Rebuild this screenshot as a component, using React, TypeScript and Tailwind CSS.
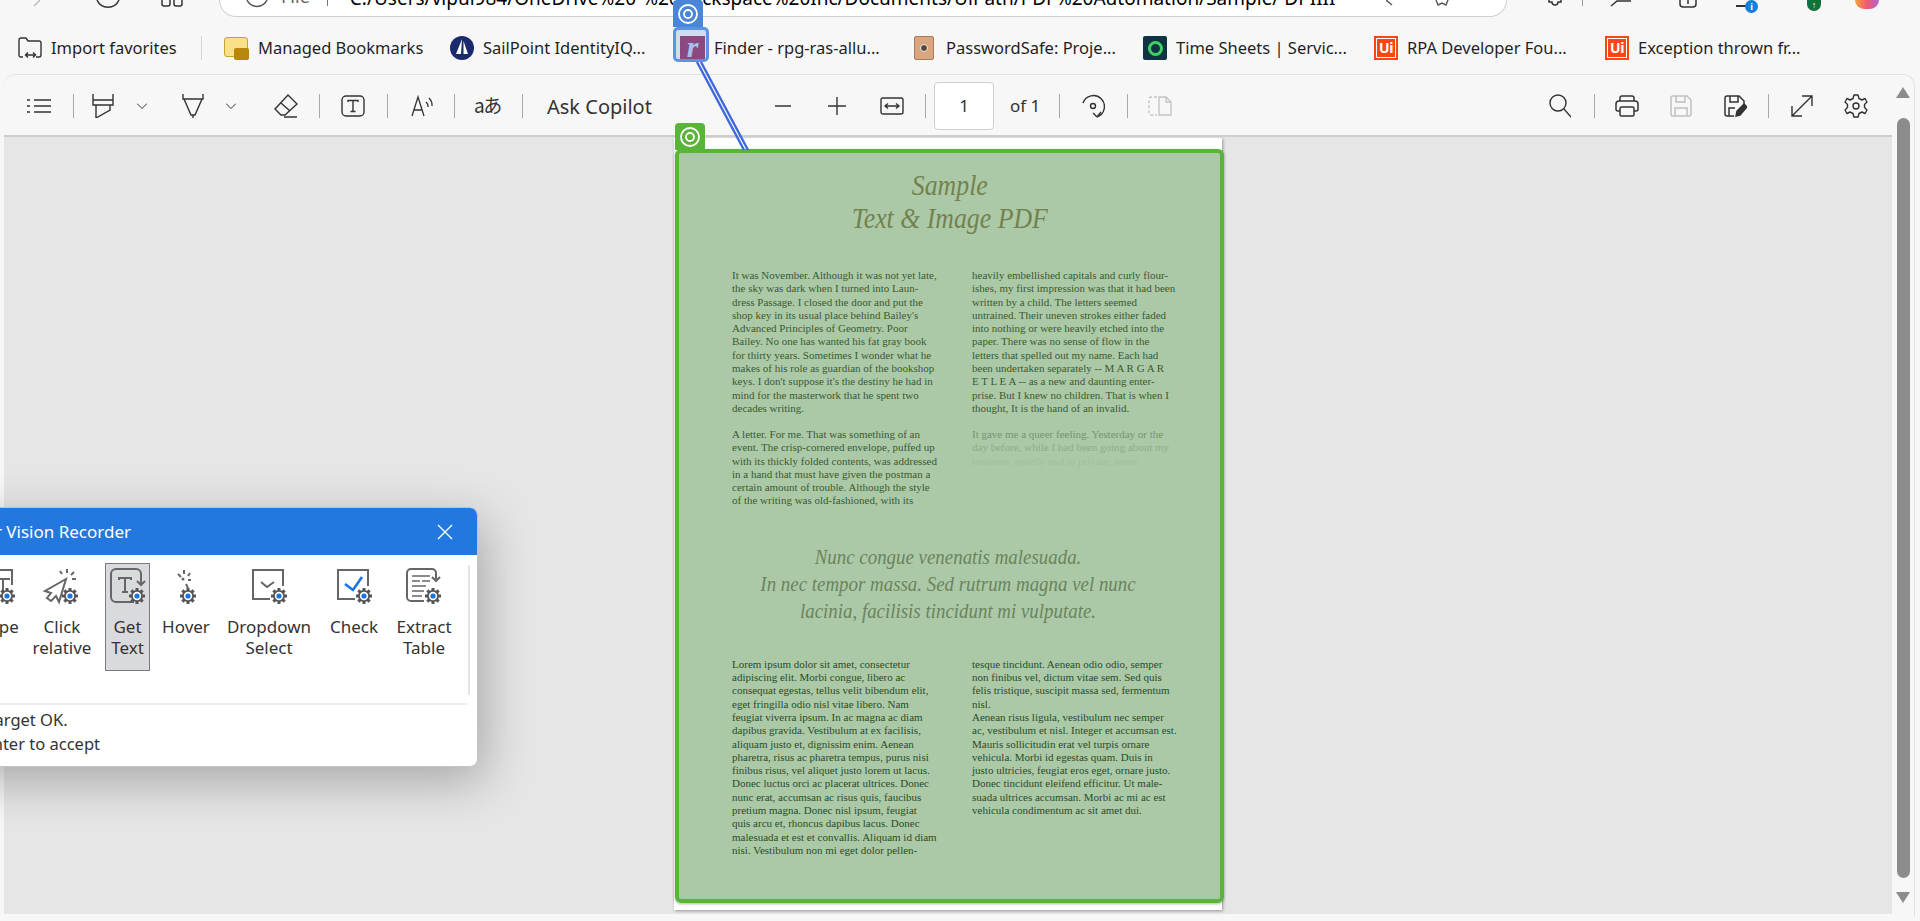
import React from "react";

const S = ({ w, h, vb, children, className = "" }: { w: number; h: number; vb?: string; children: React.ReactNode; className?: string }) => (
  <svg width={w} height={h} viewBox={vb || `0 0 ${w} ${h}`} fill="none" stroke="#333" strokeWidth={1.4} className={`shrink-0 ${className}`}>
    {children}
  </svg>
);

const Div = ({ className = "" }: { className?: string }) => <div className={`w-px h-[24px] bg-[#a9a9a9] shrink-0 ${className}`} />;

const Target = ({ className, bg }: { className: string; bg: string }) => (
  <div className={`absolute w-[30px] rounded-t-[4px] flex items-center justify-center ${bg} ${className}`}>
    <svg width="22" height="22" viewBox="0 0 22 22" fill="none" stroke="#fff" strokeWidth="1.8">
      <circle cx="11" cy="11" r="9" />
      <circle cx="11" cy="11" r="4" />
    </svg>
  </div>
);

const UiLogo = () => (
  <div className="w-[24px] h-[24px] bg-[#fa4616] p-[2px] shrink-0">
    <div className="w-full h-full border border-white flex items-center justify-center text-white text-[14px] leading-none font-bold font-['Noto_Sans',sans-serif] tracking-[-0.5px]">Ui</div>
  </div>
);

const Gear = ({ x, y }: { x: number; y: number }) => (
  <g transform={`translate(${x} ${y})`}>
    {[0, 45, 90, 135, 180, 225, 270, 315].map((a) => (
      <line key={a} x1="0" y1="-4" x2="0" y2="-8" stroke="#555" strokeWidth="3" transform={`rotate(${a})`} />
    ))}
    <circle r="6" fill="#555" stroke="none" />
    <circle r="4.2" fill="#fff" stroke="none" />
    <circle r="2.6" fill="#1a73e8" stroke="none" />
  </g>
);

const DI = ({ children }: { children: React.ReactNode }) => (
  <svg width="48" height="40" viewBox="0 0 48 40" fill="none" stroke="#666" strokeWidth="2" className="shrink-0">
    {children}
  </svg>
);

const col1a = [
  "It was November. Although it was not yet late,",
  "the sky was dark when I turned into Laun-",
  "dress Passage. I closed the door and put the",
  "shop key in its usual place behind Bailey's",
  "Advanced Principles of Geometry. Poor",
  "Bailey. No one has wanted his fat gray book",
  "for thirty years. Sometimes I wonder what he",
  "makes of his role as guardian of the bookshop",
  "keys. I don't suppose it's the destiny he had in",
  "mind for the masterwork that he spent two",
  "decades writing.",
];
const col1b = [
  "A letter. For me. That was something of an",
  "event. The crisp-cornered envelope, puffed up",
  "with its thickly folded contents, was addressed",
  "in a hand that must have given the postman a",
  "certain amount of trouble. Although the style",
  "of the writing was old-fashioned, with its",
];
const col2a = [
  "heavily embellished capitals and curly flour-",
  "ishes, my first impression was that it had been",
  "written by a child. The letters seemed",
  "untrained. Their uneven strokes either faded",
  "into nothing or were heavily etched into the",
  "paper. There was no sense of flow in the",
  "letters that spelled out my name. Each had",
  "been undertaken separately -- M A R G A R",
  "E T L E A -- as a new and daunting enter-",
  "prise. But I knew no children. That is when I",
  "thought, It is the hand of an invalid.",
];
const low1 = [
  "Lorem ipsum dolor sit amet, consectetur",
  "adipiscing elit. Morbi congue, libero ac",
  "consequat egestas, tellus velit bibendum elit,",
  "eget fringilla odio nisl vitae libero. Nam",
  "feugiat viverra ipsum. In ac magna ac diam",
  "dapibus gravida. Vestibulum at ex facilisis,",
  "aliquam justo et, dignissim enim. Aenean",
  "pharetra, risus ac pharetra tempus, purus nisi",
  "finibus risus, vel aliquet justo lorem ut lacus.",
  "Donec luctus orci ac placerat ultrices. Donec",
  "nunc erat, accumsan ac risus quis, faucibus",
  "pretium magna. Donec nisl ipsum, feugiat",
  "quis arcu et, rhoncus dapibus lacus. Donec",
  "malesuada et est et convallis. Aliquam id diam",
  "nisi. Vestibulum non mi eget dolor pellen-",
];
const low2 = [
  "tesque tincidunt. Aenean odio odio, semper",
  "non finibus vel, dictum vitae sem. Sed quis",
  "felis tristique, suscipit massa sed, fermentum",
  "nisl.",
  "Aenean risus ligula, vestibulum nec semper",
  "ac, vestibulum et nisl. Integer et accumsan est.",
  "Mauris sollicitudin erat vel turpis ornare",
  "vehicula. Morbi id egestas quam. Duis in",
  "justo ultricies, feugiat eros eget, ornare justo.",
  "Donec tincidunt eleifend efficitur. Ut male-",
  "suada ultrices accumsan. Morbi ac mi ac est",
  "vehicula condimentum ac sit amet dui.",
];

const Lines = ({ lines, className = "" }: { lines: string[]; className?: string }) => (
  <div className={`text-[11px] leading-[13.3px] whitespace-nowrap ${className}`}>
    {lines.map((l) => (
      <div key={l}>{l}</div>
    ))}
  </div>
);

export default function App() {
  return (
    <div className="relative w-[1920px] h-[921px] overflow-hidden bg-[#f7f7f7] font-['Noto_Sans',sans-serif] text-[#222]">
      {/* browser top strip */}
      <div className="flex h-[17px] overflow-hidden">
        <div className="flex items-start w-[219px] shrink-0">
          <S w={14} h={8} className="ml-[32px]" vb="0 0 14 8"><path d="M8 0 L2 6" stroke="#bbb" /></S>
          <S w={26} h={8} className="ml-[49px]" vb="0 0 26 8"><path d="M2 0 A12 12 0 0 0 24 0" strokeWidth={1.5} /></S>
          <S w={22} h={8} className="ml-[40px]" vb="0 0 22 8"><path d="M1 0 V4 a2 2 0 0 0 2 2 H7 a2 2 0 0 0 2-2 V0 M13 0 V4 a2 2 0 0 0 2 2 H19 a2 2 0 0 0 2-2 V0" strokeWidth={1.5} /></S>
        </div>
        <div className="w-[1288px] h-[17px] shrink-0 bg-white border-b border-x border-[#cfcfcf] rounded-b-[20px] flex items-start overflow-hidden">
          <S w={24} h={8} className="ml-[25px]" vb="0 0 24 8"><path d="M2 0 A11 11 0 0 0 22 0" stroke="#555" strokeWidth={1.5} /></S>
          <span className="ml-[12px] -mt-[16px] text-[18px] leading-[24px] text-[#666]">File</span>
          <div className="ml-[17px] w-px h-[6px] bg-[#777]" />
          <span className="ml-[22px] -mt-[14px] text-[19px] leading-[24px] text-black whitespace-nowrap w-[1030px] overflow-hidden">C:/Users/vipul984/OneDrive%20-%20Rackspace%20Inc/Documents/UiPath/PDF%20Automation/Sample/ DPIIII</span>
          <S w={10} h={6} className="ml-[6px]" vb="0 0 10 6"><path d="M0 0 L6 5" stroke="#555" /></S>
          <S w={14} h={6} className="ml-[39px]" vb="0 0 14 6"><path d="M1 0 L3 5 L7 3 L11 5 L13 0" stroke="#555" /></S>
        </div>
        <div className="flex items-start">
          <S w={16} h={8} className="ml-[40px]" vb="0 0 16 8"><path d="M2 0 V2 H5 A3 3 0 0 0 11 2 H14 V0" strokeWidth={1.5} /></S>
          <div className="ml-[19px] w-px h-[6px] bg-[#999]" />
          <S w={22} h={7} className="ml-[27px]" vb="0 0 22 7"><path d="M1 6 L7 1 H21" strokeWidth={1.5} /></S>
          <S w={20} h={8} className="ml-[46px]" vb="0 0 20 8"><path d="M2 0 V4 a3 3 0 0 0 3 3 H15 a3 3 0 0 0 3-3 V0 M10 0 V4" strokeWidth={1.5} /></S>
          <div className="ml-[38px] relative w-[24px] h-[13px]">
            <div className="absolute left-0 top-[5px] w-[14px] h-[2px] bg-[#333]" />
            <div className="absolute left-[9px] top-0 w-[13px] h-[13px] rounded-full bg-[#0f7fe0] text-white text-[9px] leading-[13px] text-center font-bold">i</div>
          </div>
          <div className="ml-[47px] w-[14px] h-[11px] rounded-b-full bg-[#12713b] text-white text-[9px] leading-[9px] text-center font-bold">↑</div>
          <div className="ml-[34px] w-[24px] h-[9px] rounded-b-[10px] bg-[linear-gradient(90deg,#f4a23a,#ee5a6f,#b062d8)]" />
        </div>
      </div>

      {/* bookmarks bar */}
      <div className="h-[57px] flex items-center pl-[18px] pt-[5px] text-[16.5px] whitespace-nowrap text-[#1f1f1f]">
        <S w={24} h={22} vb="0 0 24 22"><path d="M1 18 V3 a2 2 0 0 1 2-2 H8 L10 4 H21 a2 2 0 0 1 2 2 V18 a2 2 0 0 1-2 2 H18 M5 20 H3 a2 2 0 0 1-2-2 M8 18 H17 M10 15.5 L7.5 18 L10 20.5 M15 15.5 L17.5 18 L15 20.5" /></S>
        <span className="ml-[9px] w-[127px]">Import favorites</span>
        <div className="ml-[23px] w-px h-[24px] bg-[#d5d5d5]" />
        <div className="ml-[22px] relative w-[25px] h-[24px]">
          <div className="absolute left-0 top-[1px] w-[24px] h-[20px] bg-[#fbe08a] border border-[#c9a227] rounded-[3px]" />
          <div className="absolute right-0 bottom-0 w-[15px] h-[12px] bg-[#b8860b] rounded-[2px]" />
        </div>
        <span className="ml-[9px] w-[167px]">Managed Bookmarks</span>
        <svg width="24" height="24" viewBox="0 0 24 24" className="ml-[25px] shrink-0">
          <circle cx="12" cy="12" r="12" fill="#1a2a6c" />
          <path d="M12 3 L6 18 H11 Z M13.5 5 L18 18 H13.5 Z" fill="#fff" />
        </svg>
        <span className="ml-[9px] w-[165px]">SailPoint IdentityIQ...</span>
        <div className="ml-[32px] w-[25px] h-[24px] bg-[#9b3560] shrink-0 text-[#c4d0f0] font-['Liberation_Serif',serif] italic font-bold text-[30px] leading-[22px] text-center">r</div>
        <span className="ml-[9px] w-[173px]">Finder - rpg-ras-allu...</span>
        <div className="ml-[27px] w-[20px] h-[24px] rounded-[2px] bg-[#d9a67f] border border-[#a9795a] shrink-0 flex items-center justify-center">
          <div className="w-[8px] h-[8px] rounded-full bg-[#5b4636] border border-[#eee]" />
        </div>
        <span className="ml-[12px] w-[169px]">PasswordSafe: Proje...</span>
        <div className="ml-[28px] w-[24px] h-[24px] rounded-[2px] bg-[#0f3340] shrink-0 flex items-center justify-center">
          <div className="w-[15px] h-[15px] rounded-full border-[3px] border-[#3fd163]" />
        </div>
        <span className="ml-[9px] w-[198px]">Time Sheets | Servic...</span>
        <UiLogo />
        <span className="ml-[9px] w-[165px]">RPA Developer Fou...</span>
        <div className="ml-[33px]"><UiLogo /></div>
        <span className="ml-[9px] w-[168px]">Exception thrown fr...</span>
      </div>

      {/* PDF viewer card */}
      <div className="ml-[4px] w-[1911px] h-[843px] rounded-t-[12px] border-t border-r border-[#e2e2e2] bg-[#f7f7f7] flex overflow-hidden">
        <div className="flex-1 min-w-0 flex flex-col">
          {/* toolbar */}
          <div className="h-[62px] shrink-0 border-b-2 border-[#cdcdcd] flex items-center pl-[23px] pt-[2px]">
            <S w={24} h={16} vb="0 0 24 16"><path d="M7 2 H24 M7 8 H24 M7 14 H24 M0 2 H3 M0 8 H3 M0 14 H3" strokeWidth={1.6} /></S>
            <Div className="ml-[22px] w-[2px]" />
            <S w={22} h={24} className="ml-[18px]" vb="0 0 22 24"><path d="M1 0 V6 H21 V0 M1 6 V11 H21 V6 M4 11 V24 L18 16 V11" /></S>
            <S w={10} h={6} className="ml-[23px]" vb="0 0 10 6"><path d="M0 0.5 L5 5.5 L10 0.5" strokeWidth={1} /></S>
            <S w={22} h={24} className="ml-[35px]" vb="0 0 22 24"><path d="M1 0 V5 H21 V0 M2 5 L9 21 H13 L20 5 M11 21 V24" /></S>
            <S w={10} h={6} className="ml-[22px]" vb="0 0 10 6"><path d="M0 0.5 L5 5.5 L10 0.5" strokeWidth={1} /></S>
            <S w={24} h={24} className="ml-[38px]" vb="0 0 24 24"><path d="M14 1 L23 10 L11 21 H7 L1 15 Z M7 9 L16 17 M10 23 H23" /></S>
            <Div className="ml-[21px]" />
            <S w={24} h={22} className="ml-[21px]" vb="0 0 24 22"><rect x="1" y="1" width="22" height="20" rx="4" /><path d="M7 7 V5.5 H17 V7 M12 5.5 V16.5 M9.5 16.5 H14.5" /></S>
            <Div className="ml-[22px]" />
            <S w={22} h={24} className="ml-[23px]" vb="0 0 22 24"><path d="M1 22 L7 3 L13 22 M3 16 H11 M15 8 A6 6 0 0 1 17 13 M18 4 A10 10 0 0 1 21 12" strokeWidth={1.3} /></S>
            <Div className="ml-[21px]" />
            <span className="ml-[19px] w-[27px] -mt-[3px] text-[19px] leading-none text-[#333] font-['Noto_Sans_CJK_JP','Noto_Sans',sans-serif] whitespace-nowrap tracking-[-1.5px]">aあ</span>
            <Div className="ml-[21px] w-[2px]" />
            <span className="ml-[24px] w-[105px] text-[20px] mt-[1px] text-[#333] whitespace-nowrap">Ask Copilot</span>
            <S w={16} h={2} className="ml-[123px]" vb="0 0 16 2"><path d="M0 1 H16" /></S>
            <S w={18} h={18} className="ml-[37px]" vb="0 0 18 18"><path d="M0 9 H18 M9 0 V18" /></S>
            <S w={24} h={18} className="ml-[34px]" vb="0 0 24 18"><rect x="1" y="1" width="22" height="16" rx="2" /><path d="M5 9 H19 M8 6.5 L5 9 L8 11.5 M16 6.5 L19 9 L16 11.5" /></S>
            <Div className="ml-[21px]" />
            <div className="ml-[8px] w-[60px] h-[48px] bg-white border border-[#cfcfcf] rounded-[4px] flex items-center justify-center text-[17px] text-[#333] shrink-0">1</div>
            <span className="ml-[16px] w-[29px] text-[17px] text-[#333] whitespace-nowrap">of 1</span>
            <Div className="ml-[20px]" />
            <S w={24} h={24} className="ml-[21px]" vb="0 0 24 24"><path d="M2 9 A11 11 0 1 1 16 23 M16 23 L12 19 M16 23 L20 18" /><circle cx="12" cy="12" r="2.5" /></S>
            <Div className="ml-[22px]" />
            <svg width="24" height="20" viewBox="0 0 24 20" fill="none" stroke="#c4c4c4" strokeWidth="1.4" className="ml-[20px] shrink-0"><path d="M9 1 H3 a2 2 0 0 0-2 2 V17 a2 2 0 0 0 2 2 H9" strokeDasharray="3 2" /><path d="M11 1 H18 L23 6 V19 H11 Z M18 1 V6 H23" /></svg>
            <S w={22} h={24} className="ml-[377px]" vb="0 0 22 24"><circle cx="9" cy="9" r="8" /><path d="M15 15 L22 23" /></S>
            <Div className="ml-[23px] w-[2px]" />
            <S w={24} h={22} className="ml-[20px]" vb="0 0 24 22"><path d="M5 6 V3 a2 2 0 0 1 2-2 H17 a2 2 0 0 1 2 2 V6 M5 16 H3 a2 2 0 0 1-2-2 V9 a3 3 0 0 1 3-3 H20 a3 3 0 0 1 3 3 V14 a2 2 0 0 1-2 2 H19" strokeWidth={1.5} /><rect x="5" y="12" width="14" height="9" rx="1.5" strokeWidth={1.5} /></S>
            <svg width="22" height="22" viewBox="0 0 22 22" fill="none" stroke="#c0c0c0" strokeWidth="1.5" className="ml-[31px] shrink-0"><path d="M1 3 a2 2 0 0 1 2-2 H17 L21 5 V19 a2 2 0 0 1-2 2 H3 a2 2 0 0 1-2-2 Z M6 1 V7 H15 V1 M5 21 V13 H17 V21" /></svg>
            <S w={23} h={22} className="ml-[32px]" vb="0 0 23 22"><path d="M10 21 H3 a2 2 0 0 1-2-2 V3 a2 2 0 0 1 2-2 H15 L20 6 V9 M6 1 V7 H14 V1 M5 21 V13 H11" strokeWidth={1.5} /><path d="M12 21 L13 16 L20 9 L23 12 L16 20 Z" fill="#333" /></S>
            <Div className="ml-[21px]" />
            <S w={22} h={22} className="ml-[22px]" vb="0 0 22 22"><path d="M1 21 L21 1 M11 1 H21 V11 M1 11 V21 H11" strokeWidth={1.4} /></S>
            <S w={24} h={24} className="ml-[31px]" vb="0 0 24 24"><path d="M10 1 H14 L15 4.5 L18 6 L21 4.5 L23 8 L20.5 10.5 V13.5 L23 16 L21 19.5 L18 18 L15 19.5 L14 23 H10 L9 19.5 L6 18 L3 19.5 L1 16 L3.5 13.5 V10.5 L1 8 L3 4.5 L6 6 L9 4.5 Z" strokeLinejoin="round" /><circle cx="12" cy="12" r="3" /></S>
          </div>

          {/* canvas */}
          <div className="flex-1 min-h-0 bg-[#e6e6e6] mb-[3px] flex justify-center overflow-hidden">
            <div className="relative w-[548px] h-[772px] mt-px bg-white shadow-[1px_1px_3px_rgba(0,0,0,0.35)] font-['Liberation_Serif',serif] text-[#161616] pt-[31px]">
              <div className="text-center italic text-[29px] leading-[33px] text-[#9a7d60] scale-x-[0.89] pl-[4px]">
                <div>Sample</div>
                <div>Text &amp; Image PDF</div>
              </div>
              <div className="mt-[34px] grid grid-cols-[240px_1fr] pl-[58px]">
                <div>
                  <Lines lines={col1a} className="text-[#333328]" />
                  <Lines lines={col1b} className="mt-[12.7px] text-[#333328]" />
                </div>
                <div>
                  <Lines lines={col2a} className="text-[#333328]" />
                  <div className="mt-[12.7px] text-[11px] leading-[13.3px] whitespace-nowrap text-[#a0a0a0]">
                    <div>It gave me a queer feeling. Yesterday or the</div>
                    <div className="text-[#cccccc]">day before, while I had been going about my</div>
                    <div className="text-[#eeeeee]">business, quietly and in private, some</div>
                  </div>
                </div>
              </div>
              <div className="mt-[36px] text-center italic text-[21px] leading-[27px] text-[#8c8078] scale-x-[0.9]">
                <div>Nunc congue venenatis malesuada.</div>
                <div>In nec tempor massa. Sed rutrum magna vel nunc</div>
                <div>lacinia, facilisis tincidunt mi vulputate.</div>
              </div>
              <div className="mt-[33px] grid grid-cols-[240px_1fr] pl-[58px]">
                <Lines lines={low1} className="text-[#101010]" />
                <Lines lines={low2} className="text-[#101010]" />
              </div>
              {/* green selection overlay */}
              <div className="absolute left-[1px] -right-[2px] top-[11px] h-[754px] rounded-[6px] border-[4px] border-[#5ab43a] bg-[rgba(69,135,60,0.45)] shadow-[0_1px_3px_rgba(0,0,0,0.3)]" />
            </div>
          </div>
        </div>
        {/* scrollbar */}
        <div className="w-[22px] shrink-0 flex flex-col items-center pt-[12px]">
          <div className="w-0 h-0 border-x-[7.5px] border-x-transparent border-b-[11px] border-b-[#8c8c8c]" />
          <div className="mt-[20px] w-[13px] h-[760px] rounded-full bg-[#8c8c8c]" />
          <div className="mt-[14px] w-0 h-0 border-x-[7.5px] border-x-transparent border-t-[11px] border-t-[#8c8c8c]" />
        </div>
      </div>

      {/* UI automation overlay: blue target, connector, green target */}
      <svg className="absolute left-0 top-0 pointer-events-none" width="800" height="160" viewBox="0 0 800 160" fill="none">
        <path d="M697 62 L744 150 M701 62 L748 150" stroke="#3f68dc" strokeWidth="2.4" />
      </svg>
      <Target className="left-[673px] top-0 h-[27px]" bg="bg-[#4a86d8]" />
      <div className="absolute left-[673px] top-[27px] w-[36px] h-[35px] rounded-[5px] border-[3px] border-[#5b93e0] bg-[rgba(90,140,220,0.25)]" />
      <Target className="left-[675px] top-[123px] h-[27px]" bg="bg-[#5ab43a]" />

      {/* recorder dialog */}
      <div className="absolute left-[-80px] top-[507px] w-[558px] h-[260px] bg-white rounded-[8px] overflow-hidden border border-[#c4c4c4] shadow-[6px_14px_50px_rgba(0,0,0,0.28)] text-[#333]">
        <div className="h-[47px] bg-[#2278de] flex items-center text-white">
          <div className="w-[210px] text-right text-[17px] whitespace-nowrap">Computer Vision Recorder</div>
          <svg width="16" height="16" viewBox="0 0 16 16" stroke="#fff" strokeWidth="1.4" className="ml-[306px]"><path d="M1 1 L15 15 M15 1 L1 15" /></svg>
        </div>
        <div className="h-[148px] pt-[8px] flex items-start text-[17px] leading-[21px] text-center">
          <div className="ml-[55px] w-[48px] flex flex-col items-center pt-[2px]">
            <DI><path d="M13 5 H36 V20 M20 14 H34 M27 14 V28" /><Gear x={31} y={31} /></DI>
            <div className="mt-[11px]">Type</div>
          </div>
          <div className="ml-[6px] w-[64px] flex flex-col items-center pt-[2px]">
            <DI>
              <path d="M28 14 L7 26 L13 28 L9 33 L13 36 L18 31 L21 37 Z M24 9 L22 6 M29 8 V4 M33 10 L36 7 M34 14 H38" />
              <Gear x={32} y={31} />
            </DI>
            <div className="mt-[11px]">Click<br />relative</div>
          </div>
          <div className="ml-[11px] w-[45px] h-[108px] flex flex-col items-center pt-px bg-[#d9dadd] border border-[#7b7b7b]">
            <DI>
              <path d="M30 37 H12 a5 5 0 0 1 -5 -5 V9 a5 5 0 0 1 5-5 H32 a5 5 0 0 1 5 5 v10 M33 16 l4 4 4-4 M15 15 V13 H27 V15 M21 13 V27 M18 27 H24" />
              <Gear x={33} y={31} />
            </DI>
            <div className="mt-[11px]">Get<br />Text</div>
          </div>
          <div className="ml-[8px] w-[56px] flex flex-col items-center pt-[2px]">
            <DI>
              <path d="M16 9 L19 12 M22 5 v4 M28 8 L26 11 M26 15 H29 M24 19 l2 4" />
              <circle cx="21" cy="14" r="1.5" fill="#666" stroke="none" />
              <Gear x={26} y={31} />
            </DI>
            <div className="mt-[11px]">Hover</div>
          </div>
          <div className="ml-[6px] w-[98px] flex flex-col items-center pt-[2px]">
            <DI>
              <path d="M38 21 V5 H8 V34 H25 M16 17 L22 22 L29 17" />
              <Gear x={34} y={31} />
            </DI>
            <div className="mt-[11px]">Dropdown<br />Select</div>
          </div>
          <div className="ml-[8px] w-[56px] flex flex-col items-center pt-[2px]">
            <DI>
              <path d="M38 21 V5 H8 V34 H25" />
              <path d="M15 19 L23 25 L32 12" stroke="#1a73e8" strokeWidth="2.6" />
              <Gear x={34} y={31} />
            </DI>
            <div className="mt-[11px]">Check</div>
          </div>
          <div className="ml-[10px] w-[64px] flex flex-col items-center pt-[2px]">
            <DI>
              <path d="M24 36 H11 a4 4 0 0 1-4-4 V8 a4 4 0 0 1 4-4 H32 a4 4 0 0 1 4 4 V14 M32 12 l4 4 4-4" />
              <path d="M12 11 H30 M12 16 H20 M22 16 H30 M12 21 H26 M12 26 H24 M12 31 H22" strokeWidth="1.6" />
              <Gear x={33} y={31} />
            </DI>
            <div className="mt-[11px]">Extract<br />Table</div>
          </div>
          <div className="ml-[12px] mt-[2px] w-[2px] h-[130px] bg-[#e5e5e5] shrink-0" />
        </div>
        <div className="h-[2px] mr-[10px] bg-[#ececec]" />
        <div className="w-[179px] flex justify-end pt-[3px] text-[16.5px] leading-[23.5px] whitespace-nowrap">
          <div>
            <div className="ml-[49px]">Target OK.</div>
            <div>Press Enter to accept</div>
          </div>
        </div>
      </div>
    </div>
  );
}
